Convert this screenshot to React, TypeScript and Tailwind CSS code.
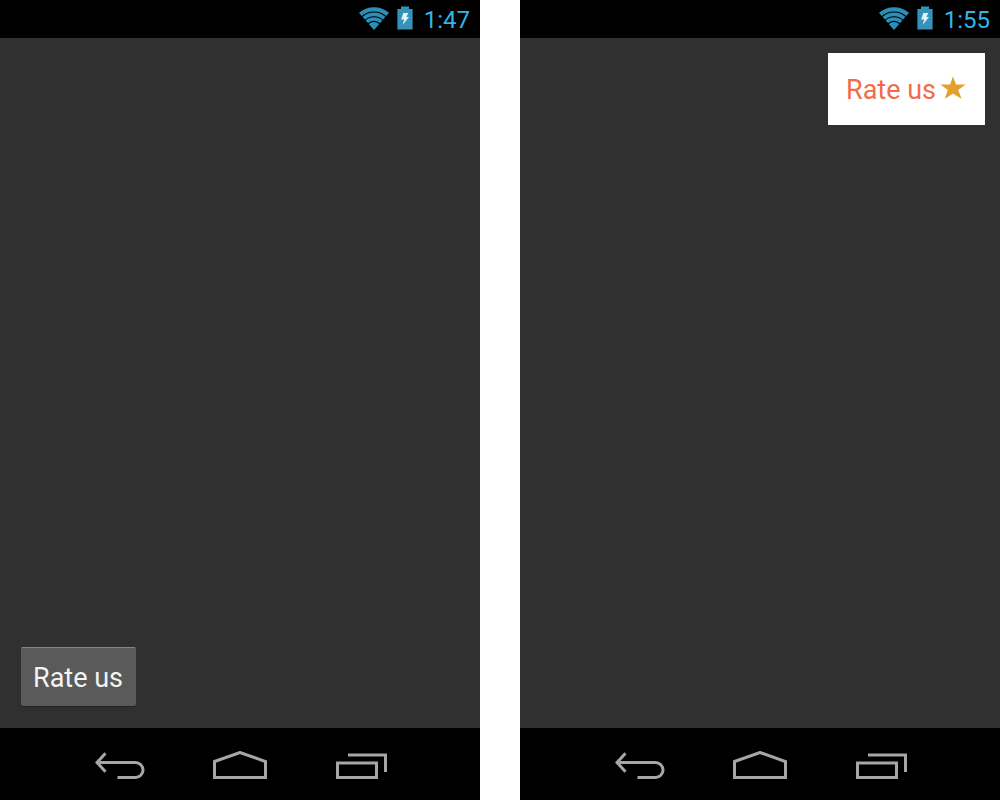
import type { ReactNode } from 'react';

function WifiIcon() {
  return (
    <svg width="30" height="23" viewBox="0 0 30 23" fill="none" aria-hidden="true">
      <defs>
        <clipPath id="wifi-wedge">
          <path d="M15 23 L-1.5 4 V-2 H31.5 V4 Z" />
        </clipPath>
      </defs>
      <g clipPath="url(#wifi-wedge)" stroke="#2b8fb8">
        <circle cx="15" cy="23" r="20.7" strokeWidth="4.2" />
        <circle cx="15" cy="23" r="15.6" strokeWidth="3.8" />
        <circle cx="15" cy="23" r="11" strokeWidth="3.4" />
        <circle cx="15" cy="23" r="7.9" fill="#2b8fb8" stroke="none" />
      </g>
    </svg>
  );
}

function BatteryIcon() {
  return (
    <svg width="16" height="24" viewBox="0 0 16 24" aria-hidden="true">
      <path d="M4 0.5 H12 V3 H15.6 V23.6 H0.4 V3 H4 Z" fill="#3593ba" />
      <path d="M6.3 7 H11.3 L9.4 11 H12 L5.6 19 L7.2 13.4 H4.2 Z" fill="#e4f1f6" />
    </svg>
  );
}

function BackIcon() {
  return (
    <svg width="50" height="28" viewBox="0 0 50 28" fill="none" stroke="#a6a6a6" strokeWidth="3" aria-hidden="true">
      <path d="M1 11.5 H40.5 A7.5 7.5 0 0 1 40.5 26.5 H22.5" />
      <path d="M10.5 2.2 L2 11.5 L10.5 20.8" />
    </svg>
  );
}

function HomeIcon() {
  return (
    <svg width="54" height="28" viewBox="0 0 54 28" fill="none" stroke="#a6a6a6" strokeWidth="3" aria-hidden="true">
      <path d="M1.5 10.5 L27 1.5 L52.5 10.5 V26.5 H1.5 Z" />
    </svg>
  );
}

function RecentIcon() {
  return (
    <svg width="52" height="28" viewBox="0 0 52 28" fill="none" stroke="#a6a6a6" strokeWidth="3" aria-hidden="true">
      <path d="M1.5 12 H40.5 V26.5 H1.5 Z" />
      <path d="M12 4 H49.5 V21" />
    </svg>
  );
}

function StarIcon() {
  return (
    <svg width="26" height="24" viewBox="0 0 26 24" aria-hidden="true">
      <path
        d="M13 0.5 L16 8.4 L25.6 8.6 L18.2 14 L21.6 22.8 L13 17.8 L4.8 22.8 L7.8 14 L0.4 8.6 L10 8.4 Z"
        fill="#e3a02d"
      />
    </svg>
  );
}

function Phone({ time, children }: { time: string; children: ReactNode }) {
  return (
    <section className="flex flex-1 flex-col bg-[#303030]">
      <header className="flex h-[38px] items-center justify-end bg-black pr-2.5 text-2xl text-[#33b5e5]">
        <span className="flex items-center gap-2 pb-0.5">
          <WifiIcon />
          <BatteryIcon />
        </span>
        <time className="ml-[11px] pt-0.5 leading-6">{time}</time>
      </header>
      <main className="flex flex-1 flex-col">{children}</main>
      <nav className="flex h-[72px] justify-center bg-black pt-0.5">
        <button type="button" aria-label="Back" className="flex w-1/4 items-center justify-center">
          <BackIcon />
        </button>
        <button type="button" aria-label="Home" className="flex w-1/4 items-center justify-center">
          <HomeIcon />
        </button>
        <button type="button" aria-label="Recent apps" className="flex w-1/4 items-center justify-center pl-1">
          <RecentIcon />
        </button>
      </nav>
    </section>
  );
}

export default function App() {
  return (
    <div className="flex min-h-screen gap-10 bg-white font-['Roboto',sans-serif]">
      <Phone time="1:47">
        <button
          type="button"
          className="mt-auto mb-[22px] ml-[21px] h-[59px] self-start rounded-xs border-t border-[#868686] bg-[#5a5a5a] pt-0.5 pr-[13px] pl-3 text-[27px] text-[#f3f3f3] shadow-[0_1px_1px_#222222]"
        >
          Rate us
        </button>
      </Phone>
      <Phone time="1:55">
        <button
          type="button"
          className="mt-[15px] mr-[15px] flex h-[72px] items-center gap-1 self-end bg-white pr-[19px] pl-[18px] text-[27px] text-[#f26c4a]"
        >
          <span className="pt-0.5">Rate us</span>
          <span className="pb-0.5">
            <StarIcon />
          </span>
        </button>
      </Phone>
    </div>
  );
}
